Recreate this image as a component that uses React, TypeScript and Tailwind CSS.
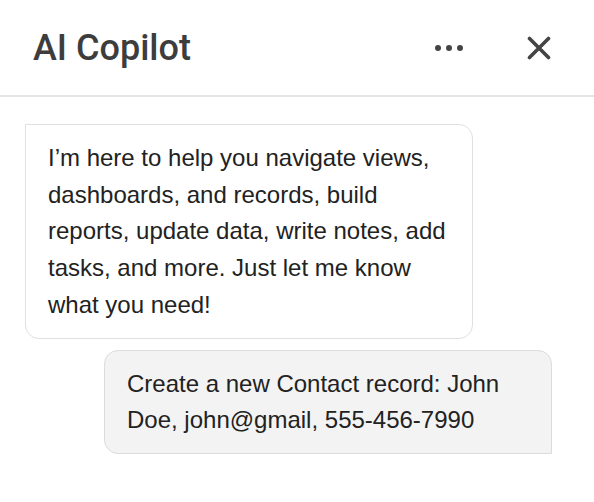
export default function App() {
  return (
    <div
      className="h-[502px] w-[594px] overflow-hidden bg-white text-[#222]"
      style={{ fontFamily: '"Liberation Sans", Arial, sans-serif' }}
    >
      {/* header */}
      <div className="flex h-[97px] items-center justify-between border-b-2 border-[#e4e4e8] pl-[33px] pr-[43px]">
        <h1
          className="text-[36px] font-medium leading-none text-[#3d3d3d]"
          style={{ fontFamily: 'Roboto, "Liberation Sans", sans-serif' }}
        >
          AI Copilot
        </h1>
        <div className="flex items-center gap-[64px]">
          <div className="flex items-center gap-[5px]">
            <span className="h-[6px] w-[6px] rounded-full bg-[#444]" />
            <span className="h-[6px] w-[6px] rounded-full bg-[#444]" />
            <span className="h-[6px] w-[6px] rounded-full bg-[#444]" />
          </div>
          <svg width="24" height="24" viewBox="0 0 24 24" className="text-[#444]">
            <path d="M2.5 2.5 L21.5 21.5 M21.5 2.5 L2.5 21.5" stroke="currentColor" strokeWidth="3.6" strokeLinecap="round" />
          </svg>
        </div>
      </div>

      {/* messages */}
      <div className="flex flex-col gap-[11px] px-[25px] pt-[27px]">
        <div className="w-[448px] self-start rounded-[14px] rounded-tl-none border-[1.5px] border-[#e0e0e0] bg-white px-[22px] pb-[14px] pt-[15px] text-[24px] leading-[36.7px]">
          I’m here to help you navigate views, dashboards, and records, build reports, update data, write notes, add tasks, and more. Just let me know what you need!
        </div>
        <div className="ml-[79px] w-[448px] rounded-[14px] rounded-br-none border-[1.5px] border-[#dcdcdc] bg-[#f3f3f3] px-[22px] pb-[14px] pt-[15px] text-[24px] leading-[36.7px]">
          Create a new Contact record: John Doe, john@gmail, 555-456-7990
        </div>
      </div>
    </div>
  );
}
